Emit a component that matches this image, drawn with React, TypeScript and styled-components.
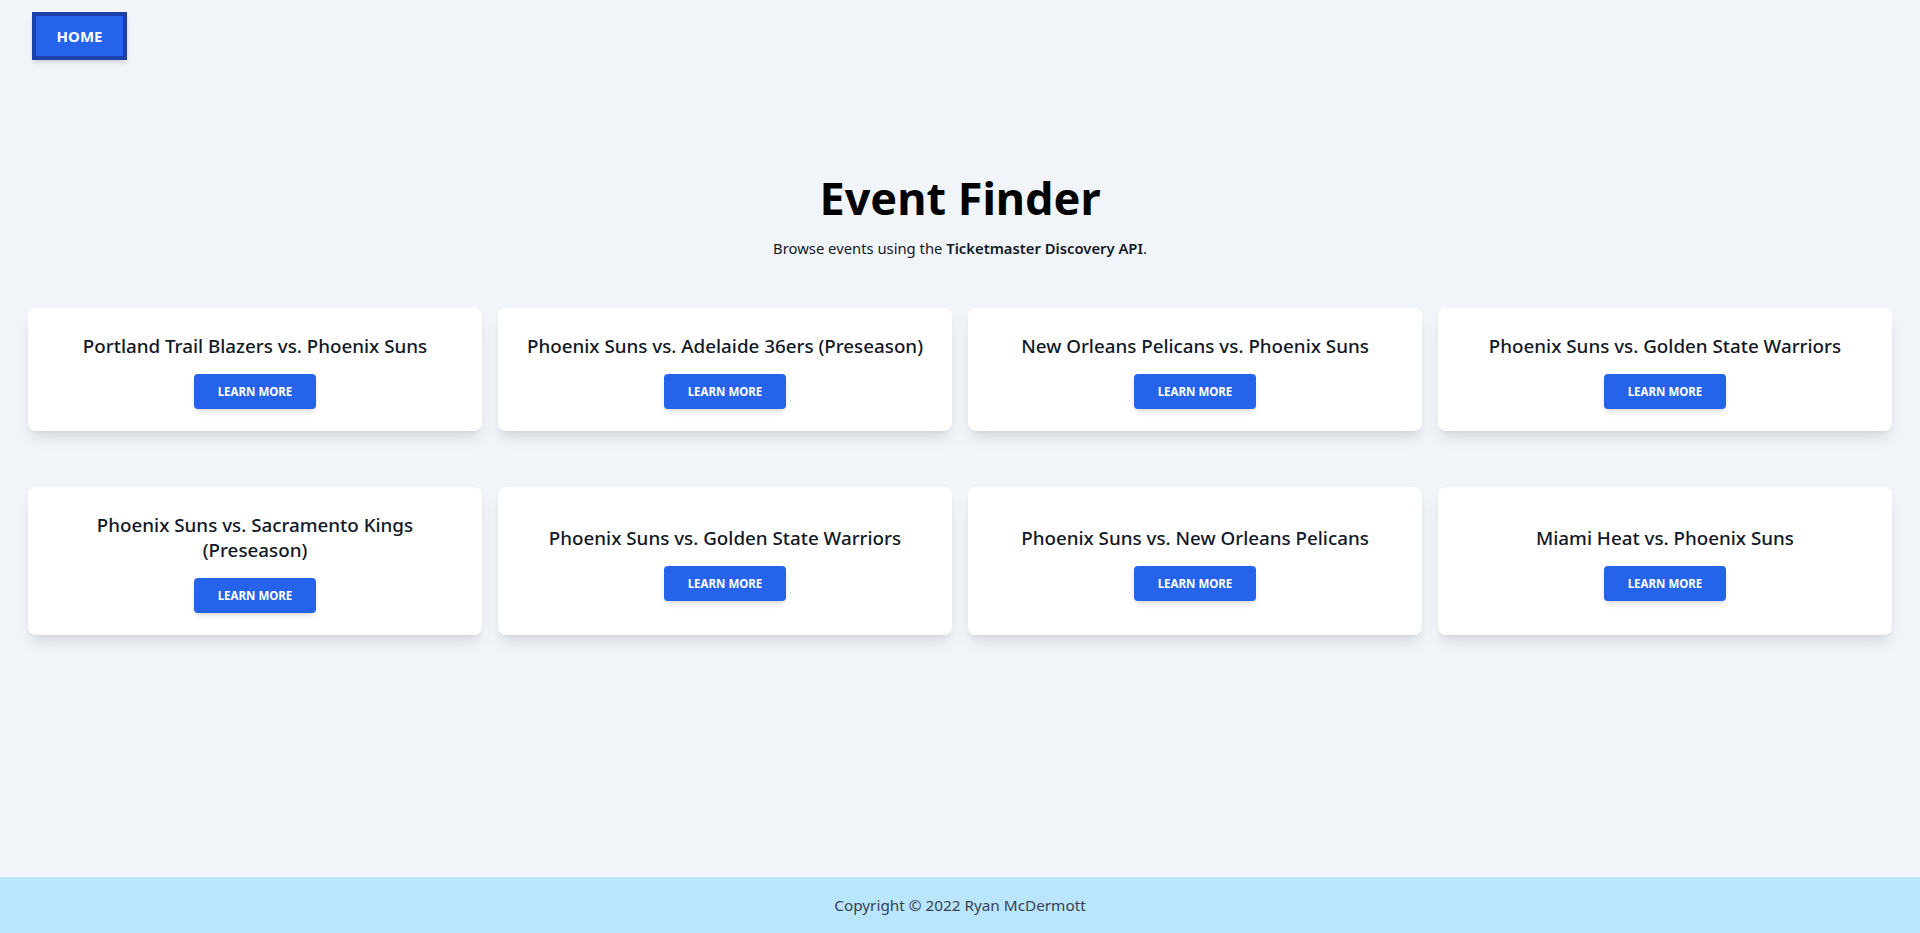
import React from "react";
import styled, { createGlobalStyle } from "styled-components";

const GlobalStyle = createGlobalStyle`
  html, body { margin: 0; padding: 0; }
  body {
    background: #f1f5f9;
    font-family: "Noto Sans", "Open Sans", sans-serif;
    color: #111827;
  }
  * { box-sizing: border-box; }
`;

const Page = styled.div`
  min-height: 100vh;
  display: flex;
  flex-direction: column;
`;

const Nav = styled.nav`
  padding: 12px 32px 0;
  display: flex;
`;

const HomeButton = styled.button`
  font-family: inherit;
  font-size: 15px;
  font-weight: 700;
  line-height: 24px;
  color: #ffffff;
  background: #2563eb;
  border: 4px solid #1e40af;
  padding: 8px 18px;
  width: 95px;
  height: 48px;
  box-shadow: 0 4px 6px -1px rgba(0,0,0,0.1), 0 2px 4px -2px rgba(0,0,0,0.1);
  cursor: pointer;
`;

const Main = styled.main`
  flex: 1;
  padding: 0 28px 40px;
`;

const Header = styled.header`
  margin-top: 114px;
  text-align: center;
`;

const Title = styled.h1`
  margin: 0;
  font-size: 45px;
  line-height: 48px;
  font-weight: 700;
  color: #000;
`;

const Subtitle = styled.p`
  margin: 16px 0 0;
  font-size: 14.8px;
  line-height: 20px;
  color: #111827;
`;

const Strong = styled.span`
  font-weight: 600;
`;

const Grid = styled.div`
  margin-top: 50px;
  display: grid;
  grid-template-columns: repeat(4, 1fr);
  column-gap: 16px;
  row-gap: 56px;
`;

const Card = styled.div`
  background: #ffffff;
  border-radius: 8px;
  padding: 26px 20px 22px;
  display: flex;
  flex-direction: column;
  align-items: center;
  justify-content: center;
  gap: 15px;
  box-shadow: 0 10px 15px -3px rgba(0,0,0,0.1), 0 4px 6px -4px rgba(0,0,0,0.1);
`;

const CardTitle = styled.h2`
  margin: 0;
  font-size: 18.8px;
  line-height: 25px;
  font-weight: 500;
  text-align: center;
  color: #111827;
`;

const LearnButton = styled.button`
  font-family: inherit;
  width: 122px;
  height: 35px;
  background: #2563eb;
  color: #ffffff;
  border: none;
  border-radius: 4px;
  font-size: 11.5px;
  font-weight: 700;
  letter-spacing: 0;
  box-shadow: 0 4px 6px -1px rgba(0,0,0,0.1), 0 2px 4px -2px rgba(0,0,0,0.1);
  cursor: pointer;
`;

const Footer = styled.footer`
  background: #bae6fd;
  height: 56px;
  display: flex;
  align-items: center;
  justify-content: center;
  font-size: 15.3px;
  color: #374151;
`;

const events = [
  "Portland Trail Blazers vs. Phoenix Suns",
  "Phoenix Suns vs. Adelaide 36ers (Preseason)",
  "New Orleans Pelicans vs. Phoenix Suns",
  "Phoenix Suns vs. Golden State Warriors",
  "Phoenix Suns vs. Sacramento Kings (Preseason)",
  "Phoenix Suns vs. Golden State Warriors",
  "Phoenix Suns vs. New Orleans Pelicans",
  "Miami Heat vs. Phoenix Suns",
];

export default function App() {
  return (
    <Page>
      <GlobalStyle />
      <Nav>
        <HomeButton>HOME</HomeButton>
      </Nav>
      <Main>
        <Header>
          <Title>Event Finder</Title>
          <Subtitle>
            Browse events using the <Strong>Ticketmaster Discovery API</Strong>.
          </Subtitle>
        </Header>
        <Grid>
          {events.map((e, i) => (
            <Card key={i}>
              <CardTitle>{e}</CardTitle>
              <LearnButton>LEARN MORE</LearnButton>
            </Card>
          ))}
        </Grid>
      </Main>
      <Footer>Copyright © 2022 Ryan McDermott</Footer>
    </Page>
  );
}
